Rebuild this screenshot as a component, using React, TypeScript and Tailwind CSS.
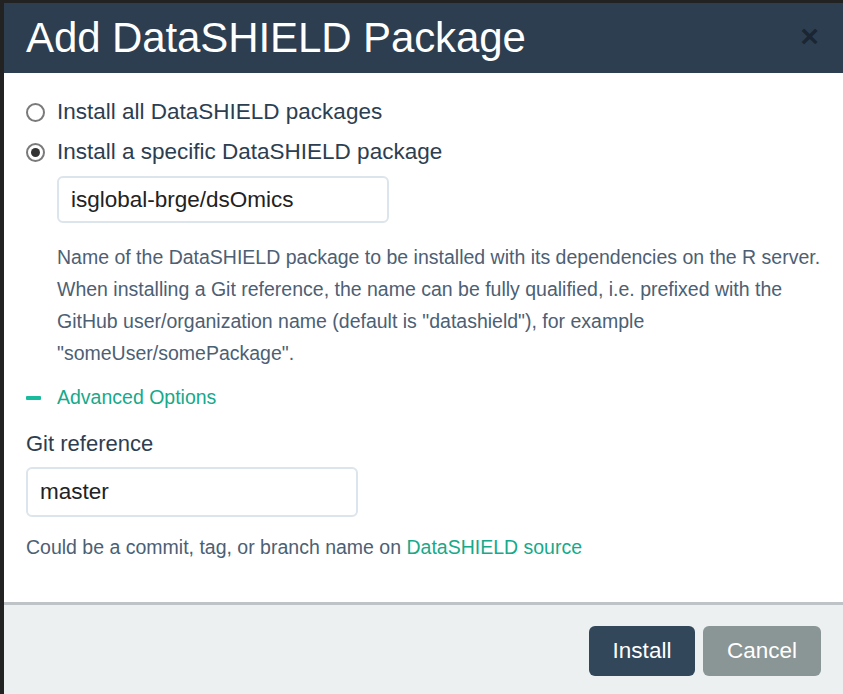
import React from "react";

const font = { fontFamily: '"Liberation Sans", Arial, sans-serif' };

function Radio({ checked }: { checked?: boolean }) {
  return (
    <div className="w-[19px] h-[19px] rounded-full border-2 border-[#7a7a7a] bg-white flex items-center justify-center shrink-0">
      {checked && <div className="w-[9px] h-[9px] rounded-full bg-[#333333]" />}
    </div>
  );
}

export default function App() {
  return (
    <div className="w-[843px] h-[694px] bg-[#222222] overflow-hidden pl-[4px] pt-[3px]" style={font}>
      <div className="flex flex-col h-full">
        <div className="h-[70px] bg-[#2c3e50] pl-[22px] pr-[24px] flex items-center justify-between shrink-0">
          <div className="text-[42px] leading-none text-white tracking-[-0.1px]">Add DataSHIELD Package</div>
          <div className="text-[32px] font-bold leading-none text-black/40 mt-[-4px]">×</div>
        </div>
        <div className="bg-white flex-1 pl-[22px] pt-[19px] flex flex-col text-[#2c3e50]">
          <div className="h-[40px] flex items-center gap-[12px] text-[22.5px]">
            <Radio />
            <span>Install all DataSHIELD packages</span>
          </div>
          <div className="h-[40px] flex items-center gap-[12px] text-[22.5px]">
            <Radio checked />
            <span>Install a specific DataSHIELD package</span>
          </div>
          <div className="ml-[31px] mt-[4px] w-[332px] h-[47px] border-2 border-[#dce4ec] rounded-[6px] flex items-center pl-[12px] text-[22.5px] text-[#222222]">
            isglobal-brge/dsOmics
          </div>
          <div className="ml-[31px] mt-[18px] text-[19.5px] leading-[32px] text-[#4c6074] pr-[10px]">
            Name of the DataSHIELD package to be installed with its dependencies on the R server. When installing a Git reference, the name can be fully qualified, i.e. prefixed with the GitHub user/organization name (default is "datashield"), for example "someUser/somePackage".
          </div>
          <div className="mt-[13px] h-[32px] flex items-center text-[19.5px] text-[#17a98a]">
            <div className="w-[15px] h-[4px] bg-[#18bc9c] rounded-[1px] mr-[16px]" />
            <span>Advanced Options</span>
          </div>
          <div className="mt-[13px] h-[32px] flex items-center text-[22px] text-[#2c3e50]">Git reference</div>
          <div className="mt-[8px] w-[332px] h-[50px] border-2 border-[#dce4ec] rounded-[6px] flex items-center pl-[12px] text-[22.5px] text-[#222222]">
            master
          </div>
          <div className="mt-[15px] h-[32px] flex items-center text-[19.5px] text-[#4c6074]">
            <span>
              Could be a commit, tag, or branch name on <span className="text-[#17a98a]">DataSHIELD source</span>
            </span>
          </div>
        </div>
        <div className="h-[92px] shrink-0 border-t-[3px] border-[#bdc3c7] bg-[#ecf0f1] flex justify-end items-start pt-[21px] pr-[22px] gap-[8px]">
          <div className="w-[106px] h-[50px] rounded-[6px] bg-[#33475b] text-white text-[22.5px] flex items-center justify-center">Install</div>
          <div className="w-[118px] h-[50px] rounded-[6px] bg-[#8a9596] text-white text-[22.5px] flex items-center justify-center">Cancel</div>
        </div>
      </div>
    </div>
  );
}
